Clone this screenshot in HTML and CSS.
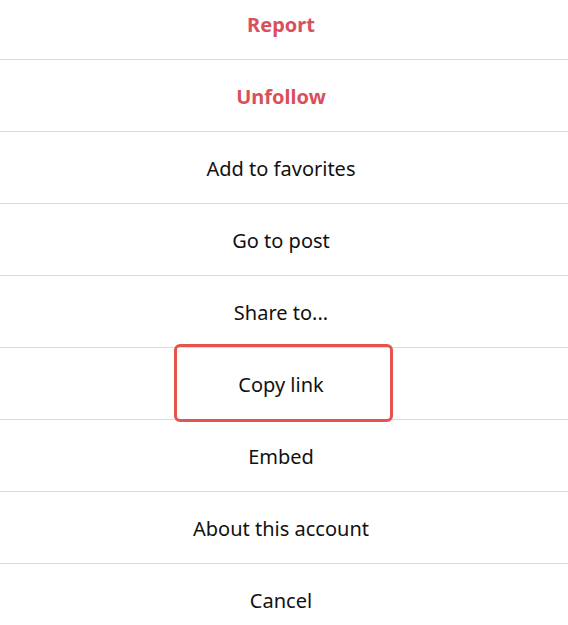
FILE: index.html
```html
<!DOCTYPE html>
<html>
<head>
<meta charset="utf-8">
<link rel="stylesheet" href="styles.css">
</head>
<body>
<div class="menu">
  <div class="item danger">Report</div>
  <div class="item danger">Unfollow</div>
  <div class="item">Add to favorites</div>
  <div class="item">Go to post</div>
  <div class="item">Share to...</div>
  <div class="item highlighted">Copy link<span class="marker"></span></div>
  <div class="item">Embed</div>
  <div class="item">About this account</div>
  <div class="item">Cancel</div>
</div>
</body>
</html>
```
FILE: styles.css
```css
html, body {
  margin: 0;
  padding: 0;
  background: #ffffff;
  overflow: hidden;
}
.menu {
  margin-top: -12px;
  display: flex;
  flex-direction: column;
  font-family: "Noto Sans", "Open Sans", sans-serif;
  font-size: 20px;
  color: #111111;
}
.item {
  position: relative;
  box-sizing: border-box;
  height: 72px;
  border-bottom: 1px solid #dbdbdb;
  display: flex;
  align-items: center;
  justify-content: center;
  padding-top: 2px;
  padding-right: 6px;
}
.danger {
  color: #d9505c;
  font-weight: 700;
}
.marker {
  position: absolute;
  top: -4px;
  bottom: -3px;
  left: 174px;
  width: 219px;
  box-sizing: border-box;
  border: 3px solid #e5534f;
  border-radius: 6px;
}
```
